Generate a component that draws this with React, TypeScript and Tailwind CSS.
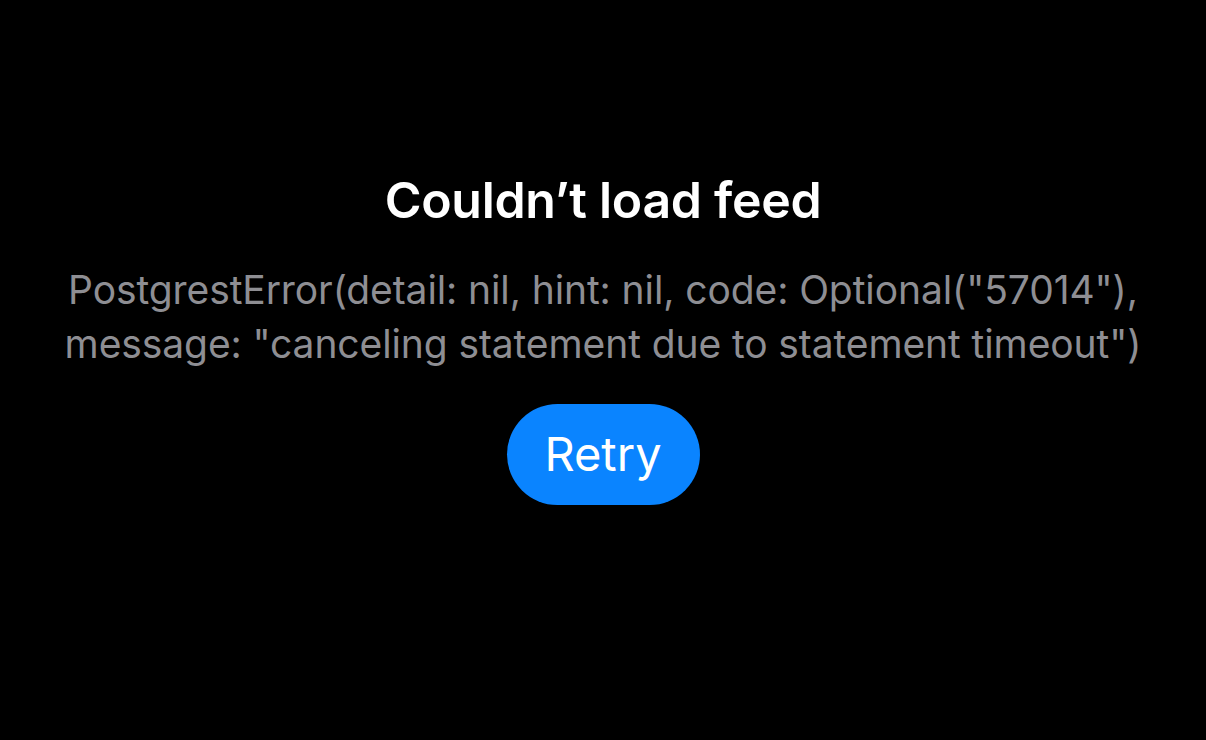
export default function App() {
  return (
    <div
      className="w-[1206px] h-[740px] bg-black flex flex-col items-center pt-[166px] text-center"
      style={{ fontFamily: 'Inter, "Noto Sans", sans-serif' }}
    >
      <h1 className="text-[50px] leading-[68px] font-semibold text-white tracking-[-0.3px]">
        Couldn’t load feed
      </h1>
      <p className="mt-[29px] text-[39px] leading-[54px] text-[#8e8e93] tracking-[-0.1px]">
        <span className="block">PostgrestError(detail: nil, hint: nil, code: Optional("57014"),</span>
        <span className="block">message: "canceling statement due to statement timeout")</span>
      </p>
      <button className="mt-[33px] w-[193px] h-[101px] rounded-full bg-[#0a84ff] text-white text-[47px]">
        Retry
      </button>
    </div>
  )
}
